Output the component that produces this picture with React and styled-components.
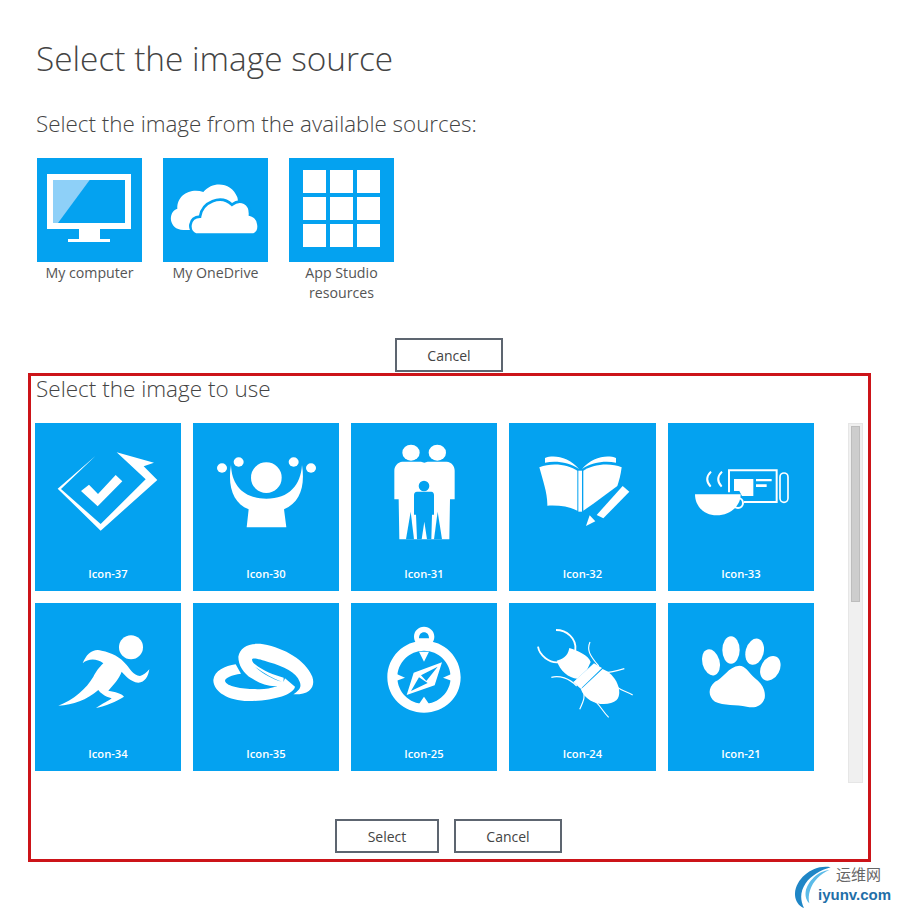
import React from 'react'
import styled, { createGlobalStyle } from 'styled-components'

const BLUE = '#04a2f0'

const GlobalStyle = createGlobalStyle`
  html, body {
    margin: 0;
    padding: 0;
    background: #fff;
    overflow: hidden;
  }
`

const Page = styled.div`
  width: 898px;
  height: 913px;
  padding-top: 36px;
  box-sizing: border-box;
  font-family: "Open Sans", "Noto Sans", sans-serif;
  color: #444;
`

const Title = styled.h1`
  margin: 0 0 28px 36px;
  font-size: 33.4px;
  line-height: 44px;
  font-weight: 300;
  color: #444;
`

const Subtitle = styled.h2`
  margin: 0 0 18px 36px;
  font-size: 22.4px;
  line-height: 32px;
  font-weight: 300;
  color: #444;
`

const SourceRow = styled.div`
  display: flex;
  gap: 21px;
  margin-left: 37px;
`

const SourceItem = styled.div`
  width: 105px;
  height: 146px;
  display: flex;
  flex-direction: column;
  align-items: center;
`

const SourceTile = styled.div`
  width: 105px;
  height: 104px;
  background: ${BLUE};
`

const SourceLabel = styled.div`
  margin-top: 1px;
  font-size: 14.2px;
  line-height: 20px;
  text-align: center;
  width: 120px;
  color: #555;
`

const TopActions = styled.div`
  display: flex;
  justify-content: center;
  margin-top: 34px;
`

const Button = styled.button`
  width: ${(p) => p.$w}px;
  height: 34px;
  box-sizing: border-box;
  padding: 0;
  background: #fff;
  border: 2px solid #5d6570;
  border-radius: 0;
  font-family: inherit;
  font-size: 14px;
  color: #444;
`

const PickerBox = styled.div`
  width: 843px;
  height: 489px;
  box-sizing: border-box;
  margin: 1px 0 0 28px;
  padding: 1px 5px 6px 4px;
  border: 3px solid #cc1419;
`

const PickerTitle = styled.h3`
  margin: 0 0 22px 1px;
  font-size: 22.5px;
  line-height: 24px;
  font-weight: 300;
  color: #444;
`

const ScrollArea = styled.div`
  display: flex;
  justify-content: space-between;
  height: 360px;
`

const IconGrid = styled.div`
  display: grid;
  grid-template-columns: 146px 146px 146px 147px 146px;
  grid-auto-rows: 168px;
  gap: 12px;
`

const IconTile = styled.div`
  background: ${BLUE};
  display: flex;
  flex-direction: column;
  align-items: center;
`

const IconLabel = styled.div`
  margin-top: 3px;
  font-size: 11.2px;
  line-height: 16px;
  font-weight: 600;
  color: #fff;
`

const Track = styled.div`
  width: 15px;
  height: 360px;
  box-sizing: border-box;
  padding: 2px;
  background: #f0f0f0;
  border: 1px solid #e6e6e6;
`

const Thumb = styled.div`
  height: 176px;
  background: #cdcdcd;
  border: 1px solid #bdbdbd;
  box-sizing: border-box;
`

const BottomActions = styled.div`
  display: flex;
  justify-content: center;
  gap: 15px;
  margin-top: 36px;
  padding-right: 1px;
`

const Logo = styled.div`
  position: relative;
  width: 100px;
  height: 45px;
  margin: 3px 0 0 795px;
`

const LogoMark = styled.svg`
  position: absolute;
  left: 0;
  top: 0;
`

const LogoName = styled.div`
  position: relative;
  margin-left: 41px;
  font-size: 15px;
  line-height: 18px;
  color: #666;
  font-family: "Noto Sans CJK SC", sans-serif;
  white-space: nowrap;
`

const LogoSite = styled.div`
  position: relative;
  margin: 3px 0 0 23px;
  font-family: "Liberation Sans", sans-serif;
  font-size: 15px;
  line-height: 18px;
  font-weight: 700;
  color: #1f6fa8;
  white-space: nowrap;
`

const Glyph = ({ x, y, w = 438, h = 420, width = 146, height = 140, children }) => (
  <svg width={width} height={height} viewBox={`${x} ${y} ${w} ${h}`} fill="#fff" style={{ display: 'block' }}>
    {children}
  </svg>
)

const SourceGlyph = ({ x, children }) => (
  <svg width="105" height="104" viewBox={`${x} 54 315 312`} fill="#fff" style={{ display: 'block' }}>
    {children}
  </svg>
)

const sources = [
  {
    label: 'My computer',
    art: (
      <SourceGlyph x={51}>
        <path fillRule="evenodd" d="M81 102H333V267H240V297H270V306H144V297H177V267H81ZM99 120V249H315V120Z" />
        <path fill="#8ed0f8" d="M99 120H209L114 249H99Z" />
      </SourceGlyph>
    ),
  },
  {
    label: 'My OneDrive',
    art: (
      <SourceGlyph x={429}>
        <path d="M490 270C445 268 443 215 472 206C470 165 512 143 550 156C580 120 636 128 652 172C660 200 640 260 600 270Z" />
        <path stroke={BLUE} strokeWidth="8" d="M528 284C502 272 506 232 540 230C546 186 602 162 636 194C662 174 692 190 690 224C718 230 726 274 700 284Z" />
      </SourceGlyph>
    ),
  },
  {
    label: 'App Studio resources',
    art: (
      <SourceGlyph x={807}>
        {[849, 930, 1011].map((cx) =>
          [90, 171, 252].map((cy) => <rect key={`${cx}-${cy}`} x={cx} y={cy} width="69" height="69" />)
        )}
      </SourceGlyph>
    ),
  },
]

const icons = [
  {
    name: 'Icon-37',
    x: 15,
    art: (
      <>
        <path d="M197 107L83 206L212 332L382 180L341 139L372 128L260 97L347 178L212 312L93 207Z" />
        <path d="M153 213L177 194L204 222L257 165L277 184L203 259Z" />
      </>
    ),
  },
  {
    name: 'Icon-30',
    x: 489,
    art: (
      <>
        <ellipse cx="576" cy="144" rx="15" ry="14" />
        <ellipse cx="626" cy="126" rx="15" ry="14" />
        <ellipse cx="791" cy="126" rx="15" ry="14" />
        <ellipse cx="843" cy="144" rx="15" ry="14" />
        <circle cx="709" cy="173" r="46" />
        <path d="M603 135C605 195 640 236 709 236C778 236 812 195 816 135C826 200 810 248 762 268L769 322H650L656 268C610 250 592 200 603 135Z" />
      </>
    ),
  },
  {
    name: 'Icon-31',
    x: 18,
    art: (
      <>
        <ellipse cx="198" cy="98" rx="26" ry="24" />
        <ellipse cx="277" cy="98" rx="26" ry="24" />
        <path d="M172 125H228L238 128L248 125H305C320 126 329 138 329 152V238H315L313 358H163L161 238H148V152C148 138 158 126 172 125Z" />
        <g fill={BLUE}>
          <circle cx="237" cy="198" r="16" />
          <path d="M216 215H259C264 215 267 219 267 225V284H261L259 358H246L238 305L230 358H216L213 284H207V225C207 219 210 215 216 215Z" />
          <path d="M197 275L183 358H207Z" />
          <path d="M278 275L267 358H291Z" />
        </g>
      </>
    ),
  },
  {
    name: 'Icon-32',
    x: 492,
    art: (
      <>
        <path d="M580 142C620 125 670 135 694 152V272C670 260 640 255 604 257C605 220 590 180 580 142Z" />
        <path d="M712 152C735 135 790 125 827 142C824 165 820 180 814 198L744 250L712 272Z" />
        <path d="M697 152H708V275H697Z" />
        <path d="M597 114C625 103 670 112 699 147C670 127 630 121 597 128Z" />
        <path d="M810 114C782 103 737 112 708 147C737 127 777 121 810 128Z" />
        <path d="M752 285L830 198L850 215L772 295Z" />
        <path d="M731 286L748 304L720 318Z" />
      </>
    ),
  },
  {
    name: 'Icon-33',
    x: 24,
    y: 24,
    art: (
      <>
        <path d="M105 238H242C242 272 212 301 170 301C130 301 105 272 105 238Z" />
        <circle cx="234" cy="264" r="15" fill="none" stroke="#fff" strokeWidth="6" />
        <path d="M153 170C138 185 138 200 152 215M186 170C171 185 171 200 185 215" fill="none" stroke="#fff" strokeWidth="6" />
        <path d="M207 232V166H350V261H252" fill="none" stroke="#fff" strokeWidth="6" />
        <rect x="360" y="174" width="24" height="88" rx="12" fill="none" stroke="#fff" strokeWidth="5" />
        <path d="M222 192H280V243H246L238 228H222Z" />
        <path d="M288 192H335V199H288ZM288 208H320V216H288Z" />
      </>
    ),
  },
  {
    name: 'Icon-34',
    x: 15,
    art: (
      <>
        <circle cx="303" cy="142" r="36" />
        <path d="M158 190C170 160 190 145 215 152C245 158 270 170 290 195C300 207 310 225 330 228C340 226 350 218 358 208C355 228 345 248 325 248C300 245 285 225 275 215C268 235 250 255 235 272C255 275 275 280 282 290C260 305 225 318 198 324C215 312 240 300 245 295C225 290 210 278 205 270C170 300 130 315 85 317C130 300 170 265 190 230C200 210 215 195 220 190C200 175 175 175 158 190Z" />
      </>
    ),
  },
  {
    name: 'Icon-35',
    x: 489,
    art: (
      <g transform="translate(525 105)">
        <path d="M92 88L108 116C80 120 60 128 60 138C65 155 110 162 150 162C190 165 235 155 240 130L270 155C265 180 200 198 130 198C70 198 25 170 25 135C28 108 60 92 92 88Z" />
        <path d="M100 65C105 35 135 22 175 28C240 40 300 75 322 125C332 155 315 180 265 178C285 165 290 155 284 140C274 112 236 94 192 82C165 72 141 66 141 74C142 80 146 85 150 88C176 108 205 120 236 128L235 150C205 160 170 150 140 130C115 115 100 90 100 65Z" />
        <path fill={BLUE} d="M150 95C172 116 205 133 230 140C205 130 175 114 150 95Z" />
      </g>
    ),
  },
  {
    name: 'Icon-25',
    x: 18,
    art: (
      <>
        <path fillRule="evenodd" d="M237 122C298 122 347 171 347 232C347 293 298 338 237 338C176 338 127 293 127 232C127 171 176 122 237 122ZM237 152C193 152 157 188 157 232C157 276 193 312 237 312C281 312 317 276 317 232C317 188 281 152 237 152Z" />
        <path fillRule="evenodd" d="M237 80C254 80 268 93 268 110C268 127 254 140 237 140C220 140 207 127 207 110C207 93 220 80 237 80ZM237 97C228 97 222 104 222 115H252C252 104 246 97 237 97Z" />
        <path d="M222 155H252L237 185Z" />
        <path d="M222 312H252L237 290Z" />
        <path d="M155 222V242L180 233Z" />
        <path d="M319 222V242L294 233Z" />
        <path fillRule="evenodd" d="M291 187L269 256L185 285L206 218ZM278 200L228 226L244 243ZM198 273L248 249L222 232Z" />
      </>
    ),
  },
  {
    name: 'Icon-24',
    x: 492,
    art: (
      <>
        <path d="M768 206C812 222 832 278 812 300C786 322 722 316 704 266Z" />
        <path d="M702 268L770 204" fill="none" stroke={BLUE} strokeWidth="4" />
        <path d="M744 190L768 204L704 266L682 246Z" />
        <path d="M684 242L744 186" fill="none" stroke={BLUE} strokeWidth="3" />
        <path d="M670 144C694 152 728 166 734 186L724 208L694 236C668 234 642 212 632 182C650 176 664 172 670 144Z" />
        <g fill="none" stroke="#fff" strokeWidth="5.5">
          <path d="M630 90C662 90 692 115 688 150C684 158 680 160 672 150" />
          <path d="M576 140C580 165 610 192 642 186" />
        </g>
        <g fill="none" stroke="#fff" strokeWidth="3.5">
          <path d="M732 126C722 150 730 165 758 198" />
          <path d="M616 232C640 225 670 235 692 258" />
          <path d="M776 218C795 218 815 212 835 206" />
          <path d="M804 252C815 270 840 272 860 285" />
          <path d="M706 262C722 285 712 305 701 328" />
          <path d="M726 292C760 305 765 330 788 352" />
        </g>
      </>
    ),
  },
  {
    name: 'Icon-21',
    x: 24,
    art: (
      <>
        <ellipse cx="153" cy="187" rx="26" ry="40" transform="rotate(-15 153 187)" />
        <ellipse cx="213" cy="150" rx="26" ry="41" />
        <ellipse cx="284" cy="155" rx="27" ry="40" transform="rotate(15 284 155)" />
        <ellipse cx="331" cy="205" rx="28" ry="39" transform="rotate(28 331 205)" />
        <path d="M238 197C255 197 265 215 285 235C305 250 318 270 314 295C305 320 285 325 260 320C230 313 190 318 165 305C145 290 142 265 165 245C190 235 205 200 238 197Z" />
      </>
    ),
  },
]

const App = () => (
  <Page>
    <GlobalStyle />
    <Title>Select the image source</Title>
    <Subtitle>Select the image from the available sources:</Subtitle>
    <SourceRow>
      {sources.map((s) => (
        <SourceItem key={s.label}>
          <SourceTile>{s.art}</SourceTile>
          <SourceLabel>{s.label}</SourceLabel>
        </SourceItem>
      ))}
    </SourceRow>
    <TopActions>
      <Button $w={108}>Cancel</Button>
    </TopActions>
    <PickerBox>
      <PickerTitle>Select the image to use</PickerTitle>
      <ScrollArea>
        <IconGrid>
          {icons.map((i) => (
            <IconTile key={i.name}>
              <Glyph x={i.x} y={i.y || 9}>{i.art}</Glyph>
              <IconLabel>{i.name}</IconLabel>
            </IconTile>
          ))}
        </IconGrid>
        <Track>
          <Thumb />
        </Track>
      </ScrollArea>
      <BottomActions>
        <Button $w={104}>Select</Button>
        <Button $w={108}>Cancel</Button>
      </BottomActions>
    </PickerBox>
    <Logo>
      <LogoMark width="42" height="45" viewBox="105 45 126 135">
        <path fill="#1f86c6" d="M212 52C160 42 108 85 105 130C104 150 115 168 132 174C120 150 120 125 137 100C152 78 182 60 212 52Z" />
        <path fill="#5cbbe8" d="M208 60C175 62 142 95 137 125C135 140 140 152 148 160C142 135 152 105 172 85C182 75 195 65 208 60Z" />
      </LogoMark>
      <LogoName>运维网</LogoName>
      <LogoSite>iyunv.com</LogoSite>
    </Logo>
  </Page>
)

export default App
